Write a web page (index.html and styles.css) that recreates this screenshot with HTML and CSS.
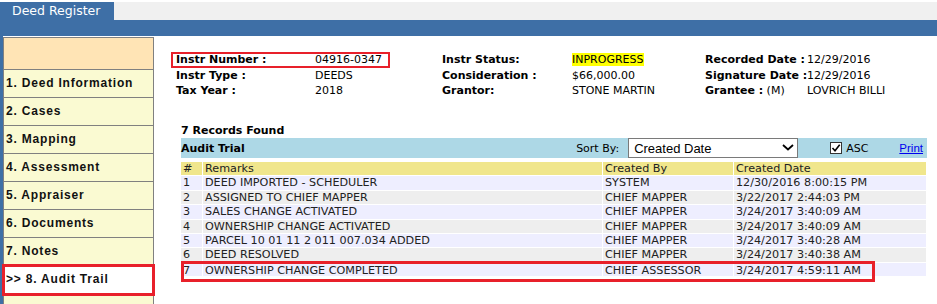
FILE: index.html
```html
<!DOCTYPE html>
<html lang="en">
<head>
    <meta charset="UTF-8">
    <meta name="viewport" content="width=device-width, initial-scale=1.0">
    <title>Deed Register - Audit Trail</title>
    <link rel="stylesheet" href="styles.css">
</head>
<body>
    <div class="topbar">
        <div class="tab">Deed Register</div>
    </div>
    <div class="bluebar"></div>

    <div class="main">
        <div class="sidebar">
            <div class="side-head"></div>
            <div class="side-item">1. Deed Information</div>
            <div class="side-item">2. Cases</div>
            <div class="side-item">3. Mapping</div>
            <div class="side-item">4. Assessment</div>
            <div class="side-item">5. Appraiser</div>
            <div class="side-item">6. Documents</div>
            <div class="side-item">7. Notes</div>
            <div class="side-item active">&gt;&gt; 8. Audit Trail</div>
        </div>

        <div class="content">
            <div class="info">
                <div class="lbl first">Instr Number :</div>
                <div>04916-0347</div>
                <div class="lbl">Instr Status:</div>
                <div><span class="status">INPROGRESS</span></div>
                <div class="lbl">Recorded Date :</div>
                <div>12/29/2016</div>

                <div class="lbl first">Instr Type :</div>
                <div>DEEDS</div>
                <div class="lbl">Consideration :</div>
                <div>$66,000.00</div>
                <div class="lbl">Signature Date :</div>
                <div>12/29/2016</div>

                <div class="lbl first">Tax Year :</div>
                <div>2018</div>
                <div class="lbl">Grantor:</div>
                <div>STONE MARTIN</div>
                <div><span class="lbl">Grantee :</span> (M)</div>
                <div>LOVRICH BILLI</div>

                <div class="mark mark-info"></div>
            </div>

            <div class="records">7 Records Found</div>

            <div class="audit-bar">
                <div class="audit-title">Audit Trial</div>
                <label class="sort-label" for="sortBy">Sort By:</label>
                <div class="sort-select">
                    <select id="sortBy">
                        <option>Created Date</option>
                        <option>Created By</option>
                        <option>Remarks</option>
                    </select>
                    <svg class="chevron" width="12" height="7" viewBox="0 0 12 7">
                        <path d="M1 1 L6 5.5 L11 1" fill="none" stroke="#000" stroke-width="1.8"/>
                    </svg>
                </div>
                <div class="asc">
                    <span class="check">
                        <svg width="10" height="10" viewBox="0 0 10 10">
                            <path d="M1.5 5 L4 7.8 L8.7 1.8" fill="none" stroke="#000" stroke-width="1.6"/>
                        </svg>
                    </span>
                    <span>ASC</span>
                </div>
                <a class="print" href="#">Print</a>
            </div>

            <div class="grid-wrap">
                <table class="audit">
                    <colgroup>
                        <col style="width: 21px">
                        <col style="width: 399px">
                        <col style="width: 130px">
                        <col style="width: 192px">
                    </colgroup>
                    <tr>
                        <th>#</th>
                        <th>Remarks</th>
                        <th>Created By</th>
                        <th>Created Date</th>
                    </tr>
                    <tr class="odd">
                        <td>1</td>
                        <td>DEED IMPORTED - SCHEDULER</td>
                        <td>SYSTEM</td>
                        <td>12/30/2016 8:00:15 PM</td>
                    </tr>
                    <tr class="even">
                        <td>2</td>
                        <td>ASSIGNED TO CHIEF MAPPER</td>
                        <td>CHIEF MAPPER</td>
                        <td>3/22/2017 2:44:03 PM</td>
                    </tr>
                    <tr class="odd">
                        <td>3</td>
                        <td>SALES CHANGE ACTIVATED</td>
                        <td>CHIEF MAPPER</td>
                        <td>3/24/2017 3:40:09 AM</td>
                    </tr>
                    <tr class="even">
                        <td>4</td>
                        <td>OWNERSHIP CHANGE ACTIVATED</td>
                        <td>CHIEF MAPPER</td>
                        <td>3/24/2017 3:40:09 AM</td>
                    </tr>
                    <tr class="odd">
                        <td>5</td>
                        <td>PARCEL 10 01 11 2 011 007.034 ADDED</td>
                        <td>CHIEF MAPPER</td>
                        <td>3/24/2017 3:40:28 AM</td>
                    </tr>
                    <tr class="even">
                        <td>6</td>
                        <td>DEED RESOLVED</td>
                        <td>CHIEF MAPPER</td>
                        <td>3/24/2017 3:40:38 AM</td>
                    </tr>
                    <tr class="odd">
                        <td>7</td>
                        <td>OWNERSHIP CHANGE COMPLETED</td>
                        <td>CHIEF ASSESSOR</td>
                        <td>3/24/2017 4:59:11 AM</td>
                    </tr>
                </table>
                <div class="mark mark-row"></div>
            </div>
        </div>
    </div>
</body>
</html>
```

FILE: styles.css
```css
body {
    margin: 0;
    font-family: "DejaVu Sans", Verdana, sans-serif;
    font-size: 11px;
    color: #000;
    background-color: #fff;
    overflow: hidden;
}
.topbar {
    margin-top: 2px;
    height: 18px;
    background-color: #f0f0f0;
    display: flex;
}
.tab {
    width: 114px;
    box-sizing: border-box;
    padding-left: 12px;
    background-color: #3e6fa6;
    color: #fff;
    font-size: 12.5px;
    line-height: 18px;
}
.bluebar {
    height: 16px;
    background-color: #3e6fa6;
}
.main {
    display: flex;
    border-left: 3px solid #3e6fa6;
    padding-top: 1px;
    height: 267px;
}

/* left menu */
.sidebar {
    width: 151px;
    box-sizing: border-box;
    border: 1px solid #808080;
    border-bottom: none;
    background-color: #fafad2;
    font-family: "Liberation Sans", Arial, sans-serif;
    font-size: 12px;
    font-weight: bold;
    letter-spacing: 0.8px;
    color: #111;
}
.side-head {
    height: 31px;
    background-color: #ffe4b5;
    border-bottom: 1px solid #808080;
}
.side-item {
    height: 27px;
    line-height: 27px;
    padding-left: 2px;
    border-bottom: 1px solid #808080;
    white-space: nowrap;
}
.side-item.active {
    background-color: #fff;
    outline: 3px solid #e8202a;
    outline-offset: -1px;
}

/* content */
.content {
    flex: 1;
}
.info {
    position: relative;
    margin: 15px 0 0 17px;
    display: grid;
    grid-template-columns: 144px 127px 130px 133px 102px auto;
    line-height: 15.5px;
    white-space: nowrap;
}
.info .lbl {
    font-weight: bold;
}
.info .first {
    padding-left: 5px;
}
.status {
    background-color: #ffff00;
}
.mark {
    position: absolute;
    box-sizing: border-box;
    border: 3px solid #e8202a;
}
.mark-info {
    left: 0;
    top: 0;
    width: 219px;
    height: 16px;
    border-width: 2px;
}
.records {
    margin: 25.5px 0 0 27px;
    font-weight: bold;
    line-height: 14px;
}
.audit-bar {
    margin-left: 27px;
    width: 746px;
    height: 20px;
    background-color: #add8e6;
    display: flex;
    align-items: center;
}
.audit-title {
    flex: 1;
    font-weight: bold;
}
.sort-label {
    margin-right: 9px;
}
.sort-select {
    position: relative;
    width: 170px;
    height: 20px;
}
.sort-select select {
    appearance: none;
    width: 100%;
    height: 20px;
    box-sizing: border-box;
    border: 1px solid #7a7a7a;
    border-radius: 0;
    background-color: #fff;
    padding: 0 0 0 5px;
    font-family: "Liberation Sans", Arial, sans-serif;
    font-size: 13px;
    color: #000;
}
.chevron {
    position: absolute;
    right: 4px;
    top: 6px;
}
.asc {
    margin-left: 32px;
    display: flex;
    align-items: center;
    gap: 4px;
}
.check {
    width: 12px;
    height: 12px;
    box-sizing: border-box;
    border: 1px solid #333;
    background-color: #fff;
    display: flex;
    align-items: center;
    justify-content: center;
}
.print {
    margin-left: 31px;
    margin-right: 4px;
    color: #0000ee;
    font-family: "Liberation Sans", Arial, sans-serif;
    font-size: 11.5px;
}

/* audit table */
.grid-wrap {
    position: relative;
    margin: 3px 0 0 26px;
}
.audit {
    width: 747px;
    table-layout: fixed;
    border-collapse: separate;
    border-spacing: 1px;
}
.audit th,
.audit td {
    padding: 0 2px;
    line-height: 13.4px;
    font-size: 11.2px;
    text-align: left;
    font-weight: normal;
    white-space: nowrap;
    color: #222;
}
.audit th {
    background-color: #f0e68c;
}
.audit tr.odd td {
    background-color: #eeeeff;
}
.audit tr.even td {
    background-color: #eeeeee;
}
.audit tr:last-child td {
    padding-top: 2px;
    line-height: 11.4px;
}
.mark-row {
    left: 1px;
    top: 100px;
    width: 694px;
    height: 21px;
}
```
